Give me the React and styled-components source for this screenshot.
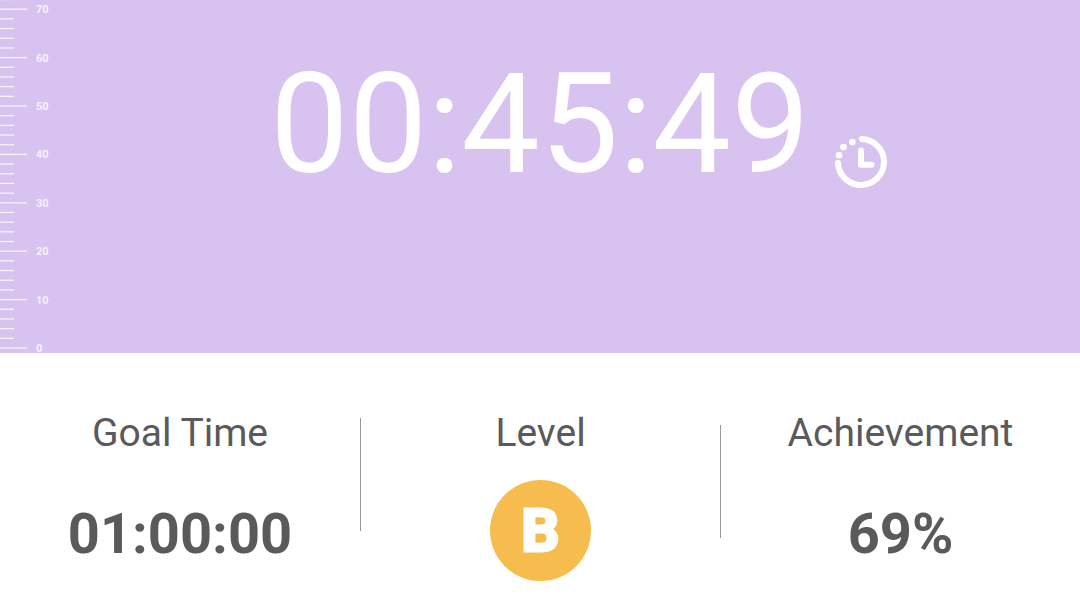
import React from "react";
import styled, { createGlobalStyle } from "styled-components";

const Global = createGlobalStyle`
  html, body { margin: 0; padding: 0; background: #fff; }
  body { font-family: Roboto, "Liberation Sans", sans-serif; overflow: hidden; }
`;
const Page = styled.div`width: 1080px; height: 607px; display: flex; flex-direction: column;`;
const Hero = styled.section`position: relative; height: 353px; background: #d8c3f0; display: flex; justify-content: center; align-items: flex-start;`;
const RulerSvg = styled.svg`position: absolute; left: 0; top: 0; overflow: visible;`;
const RulerLabel = styled.text`font: 700 11px Roboto, sans-serif; fill: #fff; fill-opacity: 0.8;`;
const TimerWrap = styled.div`position: relative; margin-top: 44px;`;
const Timer = styled.div`font-size: 140px; font-weight: 400; line-height: 160px; color: #fff; white-space: nowrap;`;
const IconSlot = styled.svg`position: absolute; left: 561px; top: 88px;`;
const Stats = styled.section`flex: 1; display: grid; grid-template-columns: 360px 1px 359px 1px 1fr;`;
const Col = styled.div`display: flex; flex-direction: column; align-items: center; padding-top: 57px;`;
const Label = styled.div`font-size: 39px; line-height: 46px; color: #5a5a5a; white-space: nowrap;`;
const Value = styled.div`font-size: 56px; font-weight: 700; line-height: 66px; margin-top: 45px; color: #5a5a5a; white-space: nowrap;`;
const Divider = styled.div`width: 1px; height: 113px; background: #999; margin-top: ${p => p.$top}px;`;
const Badge = styled.div`width: 101px; height: 101px; margin-top: 24px; border-radius: 50%; background: #f6bc4e; display: flex; align-items: center; justify-content: center; color: #fff; font-size: 60px; font-weight: 700; line-height: 1; -webkit-text-stroke: 3px #fff;`;

const first = 9.2, step = 9.68;
const ticks = Array.from({ length: 37 }, (_, i) => i);

function Ruler() {
  return (
    <RulerSvg width="60" height="353" viewBox="0 0 60 353">
      <line x1="0" x2="14" y1={first - step} y2={first - step} stroke="#fff" strokeOpacity="0.85" strokeWidth="1.2" />
      {ticks.map(i => {
        const y = first + i * step;
        const major = i % 5 === 0;
        return <line key={i} x1="0" x2={major ? 27 : 14} y1={y} y2={y} stroke="#fff" strokeOpacity="0.85" strokeWidth="1.2" />;
      })}
      {[70, 60, 50, 40, 30, 20, 10, 0].map((n, i) => (
        <RulerLabel key={n} x="36" y={first + i * 5 * step + 4}>{n}</RulerLabel>
      ))}
    </RulerSvg>
  );
}

function TimerIcon() {
  return (
    <IconSlot width="60" height="60" viewBox="-30 -30 60 60" fill="none" stroke="#fff" strokeWidth="6" strokeLinecap="round" strokeLinejoin="round">
      <path d="M1 -23 A23 23 0 1 1 -23 1" />
      <path d="M0 -11.5 V2.7 H10.5" />
      <g fill="#fff" stroke="none">
        <circle cx="-8.7" cy="-20" r="3.3" />
        <circle cx="-17.5" cy="-15" r="3.3" />
        <circle cx="-22" cy="-6.7" r="3.3" />
      </g>
    </IconSlot>
  );
}

export default function App() {
  return (
    <Page>
      <Global />
      <Hero>
        <Ruler />
        <TimerWrap>
          <Timer>00:45:49</Timer>
          <TimerIcon />
        </TimerWrap>
      </Hero>
      <Stats>
        <Col><Label>Goal Time</Label><Value>01:00:00</Value></Col>
        <Divider $top={65} />
        <Col><Label>Level</Label><Badge>B</Badge></Col>
        <Divider $top={72} />
        <Col><Label>Achievement</Label><Value>69%</Value></Col>
      </Stats>
    </Page>
  );
}
